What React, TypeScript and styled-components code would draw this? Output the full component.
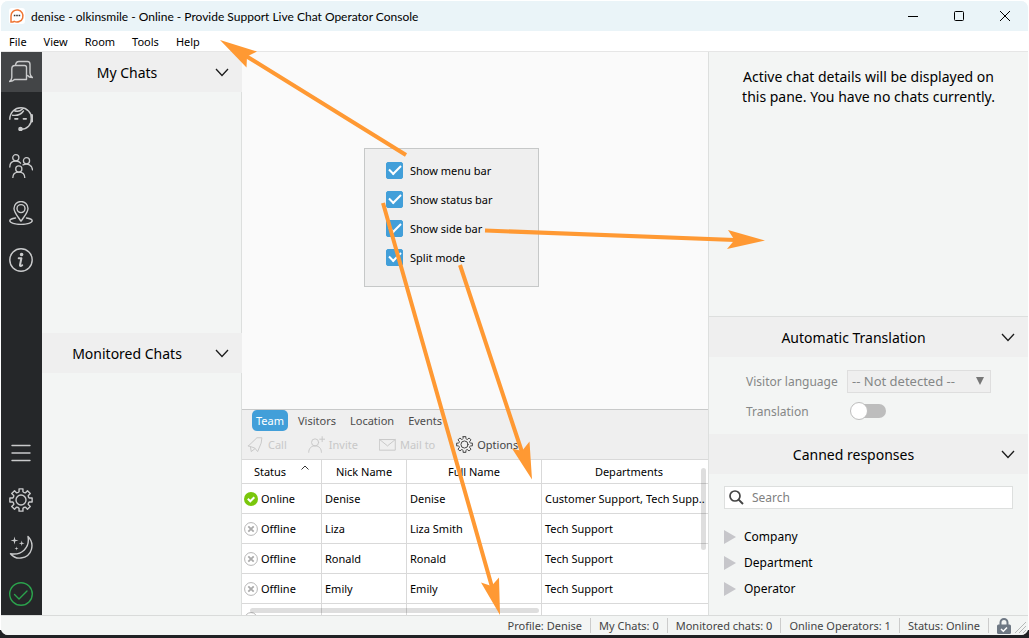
import React from "react";
import styled, { createGlobalStyle } from "styled-components";

const Global = createGlobalStyle`
  *, *::before, *::after { box-sizing: border-box; }
  body { margin: 0; background: #fff; }
  body, button, input, select, table {
    font-family: "Noto Sans", "Open Sans", sans-serif;
    font-size: 11px;
    line-height: 17px;
    color: #000;
  }
  button { border: 0; padding: 0; background: none; cursor: pointer; }
`;

const Desktop = styled.div`
  position: relative;
  height: 100vh;
  min-height: 560px;
  padding: 1px 1px 3px;
  background: linear-gradient(to top, #202124 8px, #fff 8px);
  overflow: hidden;
`;

const Window = styled.div`
  display: grid;
  grid-template-rows: 30px 21px minmax(0, 1fr) 20px;
  height: 100%;
  border-radius: 7px;
  overflow: hidden;
  background: #f3f5f4;
`;

const TitleBar = styled.header`
  display: flex;
  align-items: center;
  gap: 6px;
  padding-left: 8px;
  background: #eaf4f8;
`;

const Title = styled.h1`
  flex: 1;
  margin: 0;
  font-family: Lato, "Noto Sans", sans-serif;
  font-size: 12px;
  font-weight: 400;
`;

const WindowControls = styled.div`
  display: flex;
`;

const WindowButton = styled.button`
  display: grid;
  place-items: center;
  width: 46px;
  height: 30px;
`;

const MenuBar = styled.nav`
  display: flex;
  align-items: center;
  gap: 17px;
  padding-left: 8px;
  background: #fff;
  border-bottom: 1px solid #e6e6e6;
`;

const Body = styled.div`
  display: grid;
  grid-template-columns: 41px 200px minmax(0, 1fr) 320px;
  min-height: 0;
`;

const Rail = styled.nav`
  display: flex;
  flex-direction: column;
  gap: 7px;
  padding-bottom: 1px;
  background: #252729;
`;

const RailButton = styled.button<{ $active?: boolean; $available?: boolean }>`
  display: grid;
  place-items: center;
  height: 40px;
  padding-right: 1px;
  color: ${(p) => (p.$available ? "#2ba24c" : "#c9cacb")};
  background: ${(p) => (p.$active ? "#434547" : "transparent")};
`;

const Spring = styled.div`
  flex: 1;
`;

const ChatColumn = styled.aside`
  display: grid;
  grid-template-rows: minmax(0, 1fr) 282px;
`;

const ChatGroup = styled.section`
  display: flex;
  flex-direction: column;
`;

const GroupFill = styled.div`
  flex: 1;
  border-right: 1px solid #dddfde;
`;

const PanelHead = styled.button`
  display: flex;
  align-items: center;
  width: 100%;
  height: 40px;
  padding: 0 13px 0 0;
  background: #efefef;
`;

const PanelTitle = styled.span`
  flex: 1;
  padding: 2px 3px 0 0;
  font-size: 14px;
  line-height: 20px;
  text-align: center;
`;

const Center = styled.main`
  display: grid;
  grid-template-rows: minmax(0, 1fr) 206px;
  min-width: 0;
  min-height: 0;
`;

const Canvas = styled.div`
  display: flex;
  align-items: flex-start;
  padding: 96px 0 0 122px;
  background: #fafafa;
`;

const OptionBox = styled.fieldset`
  display: flex;
  flex-direction: column;
  gap: 12px;
  width: 175px;
  height: 139px;
  margin: 0;
  padding: 13px 21px;
  background: #efefef;
  border: 1px solid #c6c8c8;
`;

const OptionLabel = styled.label`
  display: flex;
  align-items: center;
  gap: 7px;
`;

const Tick = styled.input`
  appearance: none;
  display: grid;
  place-items: center;
  width: 17px;
  height: 17px;
  margin: 0;
  border-radius: 2px;
  background: #fff;
  border: 1px solid #429fd9;

  &:checked { background: #429fd9; }
  &:checked::after {
    content: "";
    width: 12px;
    height: 7px;
    border: solid #fff;
    border-width: 0 0 2px 2px;
    transform: translateY(-2px) rotate(-45deg);
  }
`;

const Dock = styled.section`
  display: flex;
  flex-direction: column;
  min-height: 0;
  background: #efefef;
  border-top: 1px solid #c8c9c9;
`;

const Tabs = styled.div`
  display: flex;
  align-items: center;
  gap: 6px;
  height: 21px;
  padding-left: 10px;
`;

const Tab = styled.button<{ $active?: boolean }>`
  height: 21px;
  padding: 0 4px;
  border-radius: 5px;
  color: ${(p) => (p.$active ? "#fff" : "#4c4c4c")};
  background: ${(p) => (p.$active ? "#429fd9" : "transparent")};
`;

const Tools = styled.div`
  display: flex;
  align-items: center;
  gap: 21px;
  height: 28px;
  padding: 0 0 2px 5px;
`;

const Tool = styled.button`
  display: flex;
  align-items: center;
  gap: 4px;
  color: #444;
  &:disabled { color: #c8c8c8; }
`;

const Grid = styled.div`
  position: relative;
  flex: 1;
  overflow: hidden;
  background: #fff;
  border-top: 1px solid #d9d9d9;
`;

const Table = styled.table`
  width: calc(100% + 8px);
  table-layout: fixed;
  border-collapse: separate;
  border-spacing: 0;
`;

const Col = styled.col<{ $width?: number }>`
  width: ${(p) => (p.$width ? `${p.$width}px` : "auto")};
`;

const Head = styled.th`
  height: 24px;
  padding: 0 4px;
  font-weight: 400;
  border-bottom: 1px solid #d9d9d9;
  & + & { border-left: 1px solid #d9d9d9; }
`;

const Cell = styled.td`
  height: 30px;
  padding: 0 0 0 3px;
  white-space: nowrap;
  border-bottom: 1px solid #d9d9d9;
  & + & { border-left: 1px solid #d9d9d9; }
  &:first-child { padding-left: 2px; }
`;

const StatusText = styled.span`
  display: flex;
  align-items: center;
  gap: 3px;
`;

const SortMark = styled.svg`
  margin-left: 15px;
  vertical-align: 6px;
`;

const Thumb = styled.div<{ $vertical?: boolean }>`
  position: absolute;
  border-radius: 3px;
  background: rgba(0, 0, 0, 0.13);
  ${(p) =>
    p.$vertical
      ? "top: 8px; right: 2px; width: 5px; height: 82px;"
      : "left: 8px; bottom: 2px; width: 289px; height: 5px;"}
`;

const Side = styled.aside`
  display: flex;
  flex-direction: column;
  min-height: 0;
  border-left: 1px solid #dddfde;
`;

const Details = styled.p`
  flex: 1;
  margin: 0;
  padding: 15px 24px;
  font-size: 14px;
  line-height: 20px;
  text-align: center;
  border-bottom: 1px solid #dddfde;
`;

const Translation = styled.div`
  display: grid;
  grid-template-columns: 95px 144px;
  grid-template-rows: 24px 24px;
  gap: 6px;
  align-items: center;
  height: 77px;
  padding: 12px 0 0 37px;
  color: #858787;
  font-size: 12px;
  white-space: nowrap;
`;

const Language = styled.select`
  appearance: none;
  height: 23px;
  padding: 0 4px;
  font-size: 13px;
  line-height: 18px;
  color: #858787;
  opacity: 1;
  border: 1px solid #dedede;
  border-radius: 0;
  background: #efefef url("data:image/svg+xml,%3Csvg xmlns='http://www.w3.org/2000/svg' width='8' height='8'%3E%3Cpath d='M0 0h8L4 8z' fill='%23777'/%3E%3C/svg%3E") no-repeat right 6px top 6px;
`;

const Switch = styled.input`
  appearance: none;
  display: flex;
  align-items: center;
  width: 35px;
  height: 14px;
  margin: 0 4px;
  border-radius: 7px;
  background: #bdbdbd;
  &::before {
    content: "";
    width: 18px;
    height: 18px;
    flex: none;
    margin-left: -1px;
    border-radius: 50%;
    background: #fff;
    border: 1px solid #bdbdbd;
  }
`;

const Canned = styled.div`
  height: 141px;
  padding: 12px 15px;
`;

const SearchBox = styled.label`
  display: flex;
  align-items: center;
  gap: 8px;
  height: 23px;
  padding: 0 4px;
  background: #fff;
  border: 1px solid #dddfde;
`;

const SearchInput = styled.input`
  flex: 1;
  min-width: 0;
  padding: 0;
  font-size: 12px;
  border: 0;
  outline: 0;
  background: none;
  &::placeholder { color: #808080; opacity: 1; }
`;

const Tree = styled.ul`
  list-style: none;
  margin: 0;
  padding: 15px 0 0;
`;

const Branch = styled.button`
  display: flex;
  align-items: center;
  gap: 8px;
  height: 26px;
  font-size: 12px;
  line-height: 18px;
`;

const StatusBar = styled.footer`
  display: flex;
  align-items: center;
  justify-content: flex-end;
  padding-right: 1px;
  color: #444;
  background: #f3f5f4;
  border-top: 1px solid #d9dbda;
`;

const StatusItem = styled.span`
  height: 15px;
  padding: 0 8px;
  line-height: 15px;
  border-right: 1px solid #ccc;
`;

const StatusIcons = styled.span`
  display: flex;
  align-items: flex-end;
  gap: 2px;
  padding-left: 8px;
`;

const Arrows = styled.svg`
  position: absolute;
  top: 0;
  left: 0;
  pointer-events: none;
`;

const Line = ({ size = 24, width = 1.4, children }: { size?: number; width?: number; children: React.ReactNode }) => (
  <svg width={size} height={size} viewBox="0 0 24 24" fill="none" stroke="currentColor" strokeWidth={width} strokeLinecap="round" strokeLinejoin="round" aria-hidden="true">
    {children}
  </svg>
);

const Chats = () => (
  <Line>
    <path d="M6 5.500h9.500a2 2 0 0 1 2 2V19.500h-12c-1.200 1.500-2.800 1.900-5 2 1.500-1.200 2.300-2.200 2.300-4V9c0-2 1-3.500 3.200-3.500z" />
    <path d="M6.500 5.300C6.800 2.800 8 1.500 10 1.500h8.500c2 0 2.500 1.200 2.500 3V13c0 2 .8 3.500 2.500 4.500-2.500 0-4-.6-5-2" />
  </Line>
);
const Headset = () => (
  <Line>
    <path d="M.8 12.200C.8 5.500 5.800.8 12 .8c6 0 10.600 4.800 10.600 10.700 0 6.200-4.600 10.800-10.400 10.800" />
    <path d="M3.500 8.200c5 .8 8.500-.7 11-4.200M5 3.500c3 1.400 6 1 8.500-1.500" />
    <path d="M22.800 8.300v6" strokeWidth="2.400" />
    <path d="M6 11.800h2.600M14.500 11.800h2.600" strokeWidth="1.800" />
    <circle cx="11.500" cy="22" r="1.600" fill="currentColor" />
  </Line>
);
const People = () => (
  <Line width={1.3}>
    <circle cx="6.800" cy="3.800" r="3.100" /><path d="M.8 13c0-3.800 2.200-6 6-6 2.200 0 3.800.8 4.800 2.200" />
    <circle cx="17.500" cy="6.800" r="3.100" /><path d="M14 10.900c4.800-2.200 9.200.3 9.500 5" />
    <circle cx="9.800" cy="15" r="3.100" /><path d="M3.800 24c0-3.800 2.200-5.800 6-5.800s6 2 6 5.800" />
  </Line>
);
const Pin = () => (
  <Line>
    <path d="M12 20.200C8 14.500 5 11.200 5 7.500a7 7 0 0 1 14 0c0 3.700-3 7-7 12.700z" />
    <circle cx="12" cy="7.600" r="4" />
    <path d="M6.500 17C3 17.500.8 18.500.8 19.800c0 2 5 3.600 11.200 3.600s11.200-1.600 11.200-3.600c0-1.300-2.200-2.300-5.700-2.800" />
  </Line>
);
const Info = () => (
  <Line>
    <circle cx="12" cy="12" r="11.200" />
    <circle cx="12.600" cy="6.500" r="1.100" fill="currentColor" />
    <path d="M9.700 10.200h2.700L11 17c-.2 1.200.9 1.200 2.200.2" strokeWidth="2" />
  </Line>
);
const gearPath = Array.from({ length: 8 }, (_, i) => {
  const at = (deg: number, r: number) => {
    const a = ((i * 45 + deg) * Math.PI) / 180;
    return `${(12 + r * Math.sin(a)).toFixed(2)} ${(12 - r * Math.cos(a)).toFixed(2)}`;
  };
  return `${i ? "L" : "M"}${at(-10, 11.3)}L${at(10, 11.3)}L${at(13, 8.6)}Q${at(22.5, 7.6)} ${at(32, 8.6)}`;
}).join("") + "Z";
const Gear = ({ size = 24 }: { size?: number }) => (
  <Line size={size}>
    <path d={gearPath} />
    <circle cx="12" cy="12" r="5" />
  </Line>
);
const Moon = () => (
  <Line>
    <path d="M19 1.500c7 7 4.500 20-7 21.500-4 .5-8-1.200-10.500-4.300C13 20.500 21 12.500 19 1.500z" />
    <path d="M5.500 1.500l.8 3.200 3.200.8-3.200.8-.8 3.200-.8-3.200-3.200-.8 3.200-.8zM12.700 5.500l.6 2.200 2.200.6-2.200.6-.6 2.200-.6-2.200-2.200-.6 2.200-.6zM7.500 11.500l.4 1.600 1.600.4-1.600.4-.4 1.600-.4-1.600-1.600-.4 1.600-.4z" fill="currentColor" stroke="none" />
  </Line>
);
const Chevron = () => (
  <svg width="14" height="9" viewBox="0 0 14 9" fill="none" stroke="#1c1c1c" strokeWidth="1.300" aria-hidden="true">
    <path d="M1 1l6 6.500L13 1" />
  </svg>
);
const StatusIcon = ({ online }: { online?: boolean }) => (
  <svg width="14" height="14" viewBox="0 0 14 14" fill="none" aria-hidden="true">
    {online ? (
      <><circle cx="7" cy="7" r="7" fill="#7ac70c" /><path d="M3.800 6.800l2.500 2.500 4-4" stroke="#fff" strokeWidth="2" /></>
    ) : (
      <><circle cx="7" cy="7" r="6.400" stroke="#b5b5b5" /><path d="M4.300 4.300l5.400 5.400M9.700 4.300L4.300 9.700" stroke="#aaa" strokeWidth="1.800" /></>
    )}
  </svg>
);

const operators = [
  { status: "Online", nick: "Denise", name: "Denise", dept: "Customer Support, Tech Supp.." },
  { status: "Offline", nick: "Liza", name: "Liza Smith", dept: "Tech Support" },
  { status: "Offline", nick: "Ronald", name: "Ronald", dept: "Tech Support" },
  { status: "Offline", nick: "Emily", name: "Emily", dept: "Tech Support" },
  { status: "Offline", nick: "Samantha", name: "Samantha", dept: "Customer Support" },
];

export default function App() {
  return (
    <Desktop>
      <Global />
      <Window>
        <TitleBar>
          <svg width="16" height="16" viewBox="0 0 16 16" fill="none" aria-hidden="true">
            <rect width="16" height="16" rx="3" fill="#fff" />
            <path d="M2 14V8a6 6 0 1 1 3.200 5.300C4.500 13.800 3.500 14 2 14z" stroke="#ef7634" strokeWidth="1.500" />
            <path d="M4.800 7.500h1.600M7.200 7.500h1.600M9.600 7.500h1.600" stroke="#333" strokeWidth="1.500" />
          </svg>
          <Title>denise - olkinsmile - Online - Provide Support Live Chat Operator Console</Title>
          <WindowControls>
            <WindowButton aria-label="Minimize"><svg width="10" height="10"><path d="M0 5.500h10" stroke="#000" /></svg></WindowButton>
            <WindowButton aria-label="Maximize"><svg width="10" height="10"><rect x=".5" y=".5" width="9" height="9" rx="1" fill="none" stroke="#000" /></svg></WindowButton>
            <WindowButton aria-label="Close"><svg width="10" height="10"><path d="M0 0l10 10M10 0L0 10" stroke="#000" /></svg></WindowButton>
          </WindowControls>
        </TitleBar>
        <MenuBar>
          {["File", "View", "Room", "Tools", "Help"].map((m) => <button key={m}>{m}</button>)}
        </MenuBar>
        <Body>
          <Rail>
            <RailButton $active aria-label="Chats"><Chats /></RailButton>
            <RailButton aria-label="Operators"><Headset /></RailButton>
            <RailButton aria-label="Visitors"><People /></RailButton>
            <RailButton aria-label="Location"><Pin /></RailButton>
            <RailButton aria-label="Information"><Info /></RailButton>
            <Spring />
            <RailButton aria-label="Menu"><Line><path d="M3 4.500h18M3 12h18M3 19.500h18" /></Line></RailButton>
            <RailButton aria-label="Settings"><Gear /></RailButton>
            <RailButton aria-label="Night mode"><Moon /></RailButton>
            <RailButton $available aria-label="Available"><Line><circle cx="12" cy="12" r="11.300" /><path d="M5.500 12.500l4.500 4.500 8-8" /></Line></RailButton>
          </Rail>
          <ChatColumn>
            <ChatGroup><PanelHead><PanelTitle>My Chats</PanelTitle><Chevron /></PanelHead><GroupFill /></ChatGroup>
            <ChatGroup><PanelHead><PanelTitle>Monitored Chats</PanelTitle><Chevron /></PanelHead><GroupFill /></ChatGroup>
          </ChatColumn>
          <Center>
            <Canvas>
              <OptionBox aria-label="View options">
                {["Show menu bar", "Show status bar", "Show side bar", "Split mode"].map((o) => (
                  <OptionLabel key={o}><Tick type="checkbox" defaultChecked />{o}</OptionLabel>
                ))}
              </OptionBox>
            </Canvas>
            <Dock>
              <Tabs>
                <Tab $active>Team</Tab><Tab>Visitors</Tab><Tab>Location</Tab><Tab>Events</Tab>
              </Tabs>
              <Tools>
                <Tool disabled><Line size={17}><path d="M2 14L14 2.500h7L20 10l-5 12-4-5-9-3zM5 16l1 6 5-4" /></Line>Call</Tool>
                <Tool disabled><Line size={17}><circle cx="10" cy="9" r="5" /><path d="M1 23c0-5 3-9 9-9s9 4 9 9M20 1v7M16.500 4.500h7" /></Line>Invite</Tool>
                <Tool disabled><Line size={17}><path d="M1 5h22v15H1zM1 5l11 9 11-9" /></Line>Mail to</Tool>
                <Tool><Gear size={17} />Options</Tool>
              </Tools>
              <Grid>
                <Table>
                  <colgroup><Col $width={79} /><Col $width={85} /><Col $width={135} /><Col /></colgroup>
                  <thead>
                    <tr>
                      <Head>Status<SortMark width="8" height="5" fill="none" stroke="#333" aria-hidden="true"><path d="M.5 4.500L4 1l3.500 3.500" /></SortMark></Head>
                      <Head>Nick Name</Head><Head>Full Name</Head><Head>Departments</Head>
                    </tr>
                  </thead>
                  <tbody>
                    {operators.map((o) => (
                      <tr key={o.nick}>
                        <Cell><StatusText><StatusIcon online={o.status === "Online"} />{o.status}</StatusText></Cell>
                        <Cell>{o.nick}</Cell><Cell>{o.name}</Cell><Cell>{o.dept}</Cell>
                      </tr>
                    ))}
                  </tbody>
                </Table>
                <Thumb $vertical /><Thumb />
              </Grid>
            </Dock>
          </Center>
          <Side>
            <Details>Active chat details will be displayed on this pane. You have no chats currently.</Details>
            <PanelHead><PanelTitle>Automatic Translation</PanelTitle><Chevron /></PanelHead>
            <Translation>
              <label htmlFor="language">Visitor language</label>
              <Language id="language" disabled><option>-- Not detected --</option></Language>
              <label htmlFor="translate">Translation</label>
              <Switch id="translate" type="checkbox" disabled />
            </Translation>
            <PanelHead><PanelTitle>Canned responses</PanelTitle><Chevron /></PanelHead>
            <Canned>
              <SearchBox>
                <svg width="15" height="15" viewBox="0 0 15 15" fill="none" stroke="#444" strokeWidth="1.700" aria-hidden="true"><circle cx="6" cy="6" r="5" /><path d="M9.600 9.600l4.400 4.400" strokeWidth="2" /></svg>
                <SearchInput type="search" placeholder="Search" aria-label="Search" />
              </SearchBox>
              <Tree>
                {["Company", "Department", "Operator"].map((t) => (
                  <li key={t}><Branch><svg width="12" height="14" aria-hidden="true"><path d="M0 0l12 7L0 14z" fill="#c6c6ca" /></svg>{t}</Branch></li>
                ))}
              </Tree>
            </Canned>
          </Side>
        </Body>
        <StatusBar>
          {["Profile: Denise", "My Chats: 0", "Monitored chats: 0", "Online Operators: 1", "Status: Online"].map((s) => <StatusItem key={s}>{s}</StatusItem>)}
          <StatusIcons>
            <svg width="14" height="16" viewBox="0 0 14 16" fill="none" aria-hidden="true"><path d="M3.500 8V4.500a3.500 3.500 0 0 1 7 0V8" stroke="#6e7884" strokeWidth="2" /><rect y="6.500" width="14" height="9.500" rx="1.500" fill="#6e7884" /><path d="M4 11l2.300 2.200L10 9.500" stroke="#fff" strokeWidth="1.500" /></svg>
            <svg width="14" height="14" stroke="#b5b8b7" aria-hidden="true"><path d="M2 13L13 2M6 13l7-7M10 13l3-3" /></svg>
          </StatusIcons>
        </StatusBar>
      </Window>
      <Arrows width="1029" height="638" fill="#ff9933" stroke="#ff9933" strokeWidth="4" aria-hidden="true">
        <path d="M406 155L246 56M383 203L492 587M485 230.500L735 240M460 265L522 452" />
        <path stroke="none" d="M220 40L257 51.500 247 56.500 246.500 67.500zM500 615L481 582.500 491.500 586 499 577.500zM765 240.500L728 230 734.500 240 727 249zM532 479.500L512 448.500 522 451 529.500 441.500z" />
      </Arrows>
    </Desktop>
  );
}
